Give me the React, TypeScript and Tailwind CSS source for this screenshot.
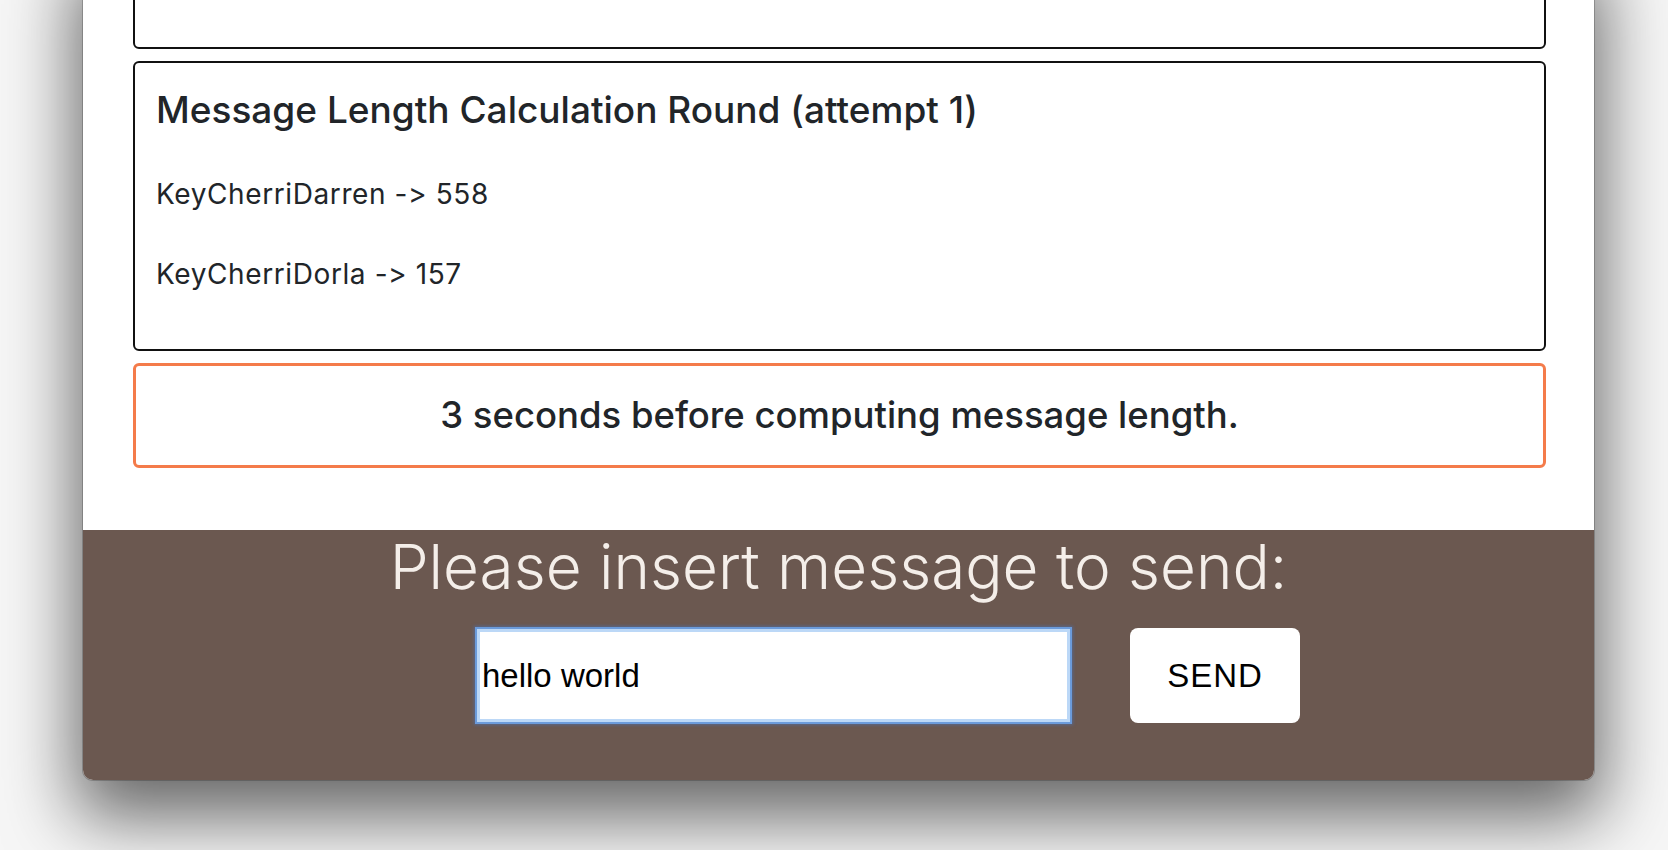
import { useState } from "react";

const karla = "font-['Inter',sans-serif] [font-feature-settings:'calt'_0]";

export default function App() {
  const [message, setMessage] = useState("hello world");

  return (
    <div className="h-[850px] w-full overflow-hidden bg-[#f6f6f6]">
      {/* Window panel */}
      <div
        className={`ml-[83px] w-[1511px] rounded-b-[10px] bg-white shadow-[0_30px_70px_8px_rgba(0,0,0,0.58)] ring-1 ring-black/20 ${karla}`}
      >
        <div className="pb-[62px] pl-[50px] pr-[48px]">
          {/* previous round, scrolled out of view */}
          <div className="-mt-[51px] h-[100px] rounded-[6px] border-2 border-[#111]" />

          {/* Current round */}
          <div className="mt-[12px] h-[290px] rounded-[6px] border-2 border-[#111] pl-[21px] pt-[28px] text-[#212529]">
            <h3 className="text-[37px] font-medium leading-none">
              Message Length Calculation Round (attempt 1)
            </h3>
            <p className="mt-[52px] text-[28px] leading-none tracking-[0.6px]">KeyCherriDarren -&gt; 558</p>
            <p className="mt-[52px] text-[28px] leading-none tracking-[0.6px]">KeyCherriDorla -&gt; 157</p>
          </div>

          {/* Countdown */}
          <div className="mt-[12px] flex h-[105px] items-center justify-center rounded-[6px] border-[3px] border-[#f47b4a] text-[#212529]">
            <span className="text-[36.5px] font-medium leading-none">
              3 seconds before computing message length.
            </span>
          </div>
        </div>

        {/* Send form */}
        <div className="h-[250px] rounded-b-[10px] bg-[#6b5850]">
          <h2 className="pt-[6px] text-center text-[62px] font-light leading-none text-[#f4eee9]">
            Please insert message to send:
          </h2>
          <form
            className="mt-[30px] flex items-center gap-[60px] pl-[394px]"
            onSubmit={(e) => e.preventDefault()}
          >
            <input
              value={message}
              onChange={(e) => setMessage(e.target.value)}
              className="h-[93px] w-[593px] border-[3px] border-[#bcd8f7] bg-white px-[2px] font-['Liberation_Sans',sans-serif] text-[33px] text-black shadow-[0_0_0_2px_#6b9bdb,0_0_3px_3px_rgba(70,120,200,0.5)] outline-none"
            />
            <button
              type="submit"
              className="h-[95px] w-[170px] rounded-[8px] bg-white font-['Liberation_Sans',sans-serif] text-[33px] tracking-[1px] text-black"
            >
              SEND
            </button>
          </form>
        </div>
      </div>
    </div>
  );
}
